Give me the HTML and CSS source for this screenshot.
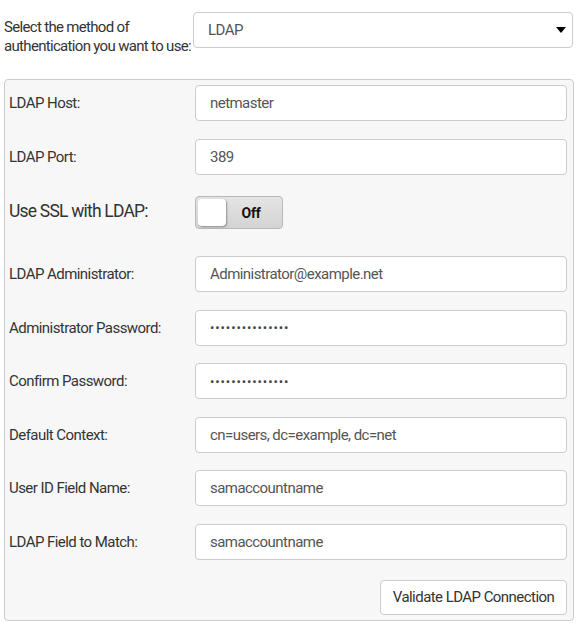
FILE: index.html
```html
<!DOCTYPE html>
<html>
<head>
<meta charset="utf-8">
<link rel="stylesheet" href="styles.css">
</head>
<body>
<div class="method-row">
  <label class="method-label">Select the method of<br>authentication you want to use:</label>
  <div class="select">
    <span>LDAP</span>
    <span class="caret"></span>
  </div>
</div>
<div class="panel">
  <div class="row"><label class="lbl">LDAP Host:</label><div class="input">netmaster</div></div>
  <div class="row"><label class="lbl">LDAP Port:</label><div class="input">389</div></div>
  <div class="row ssl-row"><label class="lbl big">Use SSL with LDAP:</label>
    <div class="toggle"><span class="knob"></span><span class="toggle-text">Off</span></div>
  </div>
  <div class="row"><label class="lbl">LDAP Administrator:</label><div class="input">Administrator@example.net</div></div>
  <div class="row"><label class="lbl">Administrator Password:</label><div class="input dots">&#8226;&#8226;&#8226;&#8226;&#8226;&#8226;&#8226;&#8226;&#8226;&#8226;&#8226;&#8226;&#8226;&#8226;&#8226;</div></div>
  <div class="row"><label class="lbl">Confirm Password:</label><div class="input dots">&#8226;&#8226;&#8226;&#8226;&#8226;&#8226;&#8226;&#8226;&#8226;&#8226;&#8226;&#8226;&#8226;&#8226;&#8226;</div></div>
  <div class="row"><label class="lbl">Default Context:</label><div class="input">cn=users, dc=example, dc=net</div></div>
  <div class="row"><label class="lbl">User ID Field Name:</label><div class="input">samaccountname</div></div>
  <div class="row"><label class="lbl">LDAP Field to Match:</label><div class="input">samaccountname</div></div>
  <div class="btn-row"><button class="btn">Validate LDAP Connection</button></div>
</div>
</body>
</html>
```
FILE: styles.css
```css
* { box-sizing: border-box; }
body {
  margin: 0;
  background: #fff;
  font-family: Roboto, "Liberation Sans", sans-serif;
  font-size: 15px;
  letter-spacing: -0.55px;
  color: #333;
}
.method-row {
  display: flex;
  align-items: flex-end;
  padding: 12px 3px 0 4px;
}
.method-label {
  flex: none;
  width: 189px;
  line-height: 19px;
  white-space: nowrap;
  letter-spacing: -0.68px;
  margin-bottom: -7.5px;
}
.select {
  flex: 1;
  height: 36px;
  border: 1px solid #ccc;
  border-radius: 4px;
  display: flex;
  align-items: center;
  justify-content: space-between;
  padding: 0 6px 0 14px;
  color: #555;
}
.caret {
  width: 0; height: 0;
  border-left: 5px solid transparent;
  border-right: 5px solid transparent;
  border-top: 6px solid #000;
}
.panel {
  margin: 31px 2px 0 4px;
  background: #f7f7f7;
  border: 1px solid #ccc;
  border-radius: 4px;
  padding: 5px 6px 5px 4px;
  display: flex;
  flex-direction: column;
  gap: 17.5px;
}
.row {
  display: flex;
  align-items: center;
}
.lbl {
  width: 186px;
  flex: none;
}
.lbl.big { font-size: 17.5px; letter-spacing: -0.8px; }
.input {
  flex: 1;
  height: 36px;
  background: #fff;
  border: 1px solid #ccc;
  border-radius: 4px;
  display: flex;
  align-items: center;
  padding: 0 14px;
  color: #555;
}
.input.dots { font-size: 13px; letter-spacing: 0.9px; color: #444; }
.ssl-row { height: 46.5px; align-items: flex-start; }
.ssl-row .lbl { margin-top: 9px; }
.toggle {
  margin-top: 4px;
  width: 88px;
  height: 33px;
  border: 1px solid #b8b8b8;
  border-radius: 4px;
  background: linear-gradient(#e4e4e4, #d4d4d4);
  display: flex;
  align-items: center;
  padding: 2px;
}
.knob {
  width: 28px;
  height: 27px;
  background: #fff;
  border-radius: 4px;
  box-shadow: 1px 1px 2px rgba(0,0,0,0.35);
}
.toggle-text {
  flex: 1;
  text-align: center;
  font-weight: bold;
  color: #111;
  font-size: 14px;
  letter-spacing: -0.3px;
  padding-right: 4px;
}
.btn-row {
  display: flex;
  justify-content: flex-end;
  margin-top: 2.5px;
}
.btn {
  font-family: inherit;
  font-size: 15px;
  letter-spacing: -0.55px;
  color: #333;
  background: #fff;
  border: 1px solid #ccc;
  border-radius: 4px;
  height: 35px;
  width: 187px;
  padding: 0;
}
```
